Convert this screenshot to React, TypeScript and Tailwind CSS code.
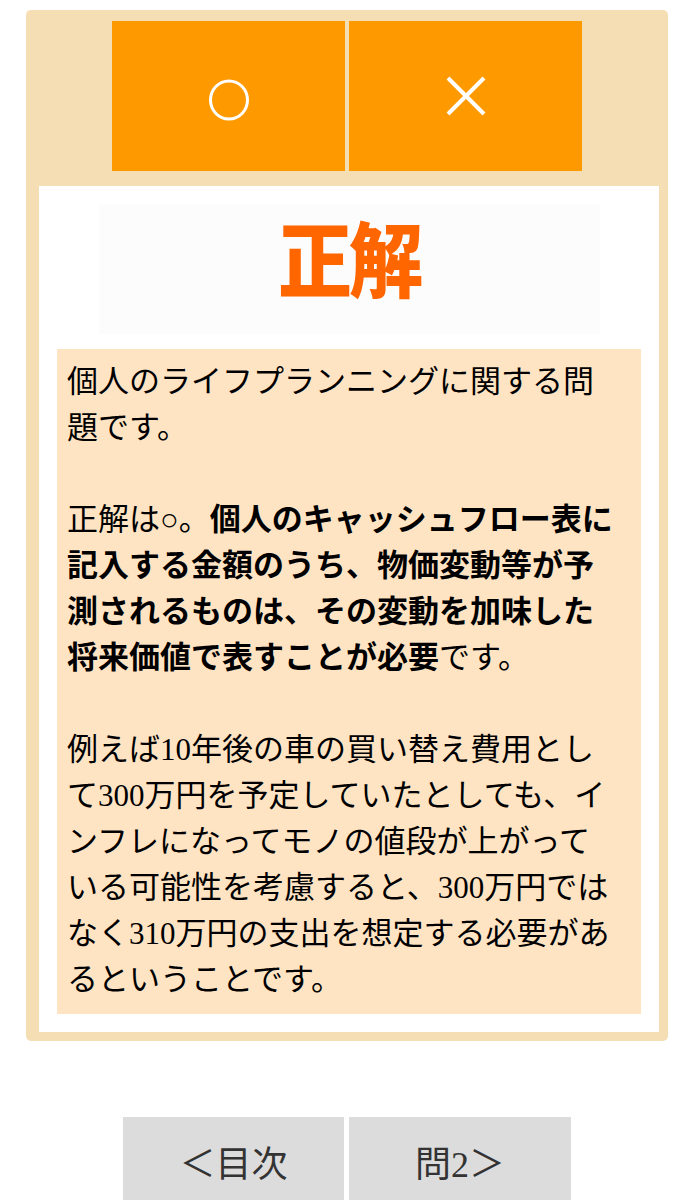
import React from "react"

const serif = { fontFamily: '"Liberation Serif", "Noto Sans CJK JP", serif' }

function Circle() {
  return (
    <svg width="44" height="44" viewBox="0 0 44 44" className="mt-[8px]">
      <ellipse cx="22" cy="22" rx="18.5" ry="19" fill="none" stroke="white" strokeWidth="3" />
    </svg>
  )
}

function Cross() {
  return (
    <svg width="40" height="40" viewBox="0 0 40 40">
      <path d="M2 2 L38 38 M38 2 L2 38" stroke="white" strokeWidth="4" fill="none" />
    </svg>
  )
}

export default function App() {
  return (
    <div className="min-h-[1200px] w-full bg-white pt-[10px]" style={serif}>
      <div className="ml-[26px] w-[642px] rounded-[5px] bg-[#f5deb3] pb-[9px] pl-[13px] pr-[9px] pt-[11px]">
        <div className="mb-[15px] flex gap-[4px] pl-[73px]">
          <button className="flex h-[150px] w-[233px] items-center justify-center bg-[#ff9900]">
            <Circle />
          </button>
          <button className="flex h-[150px] w-[233px] items-center justify-center bg-[#ff9900]">
            <Cross />
          </button>
        </div>

        <div className="bg-white px-[18px] pb-[18px] pt-[18px]">
          <div className="mx-auto mb-[15px] flex h-[130px] w-[501px] justify-center bg-[#fcfcfc] pt-[17px]">
            <span
              className="inline-block origin-center scale-y-[1.1] text-[74px] font-black leading-none tracking-[-3px] text-[#ff6600]"
              style={{ fontFamily: '"Noto Sans CJK JP", sans-serif' }}
            >
              正解
            </span>
          </div>

          <div className="bg-[#ffe4c4] px-[10px] pb-[11px] pt-[10px] text-[31px] leading-[46px] text-black">
            個人のライフプランニングに関する問
            <br />
            題です。
            <br />
            <br />
            正解は○。
            <b className="font-bold">
              個人のキャッシュフロー表に
              <br />
              記入する金額のうち、物価変動等が予
              <br />
              測されるものは、その変動を加味した
              <br />
              将来価値で表すことが必要
            </b>
            です。
            <br />
            <br />
            例えば10年後の車の買い替え費用とし
            <br />
            て300万円を予定していたとしても、イ
            <br />
            ンフレになってモノの値段が上がって
            <br />
            いる可能性を考慮すると、300万円では
            <br />
            なく310万円の支出を想定する必要があ
            <br />
            るということです。
          </div>
        </div>
      </div>

      <div className="ml-[123px] mt-[76px] flex gap-[5px]">
        <button className="flex h-[96px] w-[221px] items-center justify-center bg-[#dcdcdc] text-[36px] text-[#333333]">
          ＜目次
        </button>
        <button className="flex h-[96px] w-[222px] items-center justify-center bg-[#dcdcdc] text-[36px] text-[#333333]">
          問2＞
        </button>
      </div>
    </div>
  )
}
